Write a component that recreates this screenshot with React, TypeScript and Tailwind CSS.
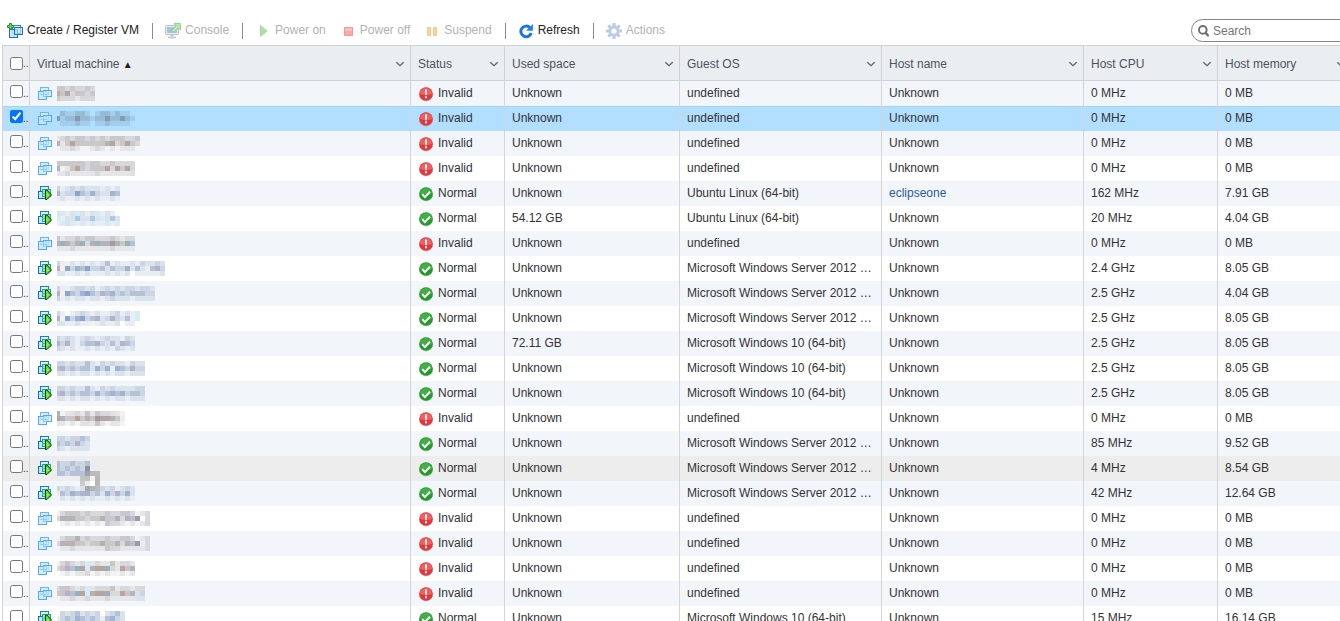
import { useState, type ReactNode } from 'react'

type Mosaic = [string, string, string]

interface Vm {
  name: Mosaic
  running: boolean
  used: string
  os: string
  host: string
  cpu: string
  memory: string
  hovered?: boolean
}

const TONES: Record<string, string> = {
  '0': '#f3f3f4',
  '1': '#e6e6e8',
  '2': '#d8d8dc',
  '3': '#c9c8cd',
  '4': '#b3b2b8',
  '5': '#9c9ca2',
  a: '#e9eef5',
  b: '#dae2ec',
  c: '#cbd5e3',
  d: '#b5c1d6',
  e: '#9fb3d3',
  f: '#8ba6ca',
  g: '#b3b2c8',
  p: '#e6dfdd',
  q: '#cfc3c1',
  r: '#b5a5a1',
  s: '#f6f0ec',
  t: '#c9c9bd',
  u: '#d6eaf8',
  v: '#aacbe6',
  w: '#9bb1b8',
  x: '#a3cdea',
  y: '#95bbd6',
  z: '#809cb0',
}

const WIN_SERVER = 'Microsoft Windows Server 2012 …'
const WIN_10 = 'Microsoft Windows 10 (64-bit)'
const UBUNTU = 'Ubuntu Linux (64-bit)'

function invalid(name: Mosaic): Vm {
  return { name, running: false, used: 'Unknown', os: 'undefined', host: 'Unknown', cpu: '0 MHz', memory: '0 MB' }
}

function normal(name: Mosaic, os: string, cpu: string, memory: string, used = 'Unknown', host = 'Unknown'): Vm {
  return { name, running: true, used, os, host, cpu, memory }
}

const VMS: Vm[] = [
  invalid(['33232232', '4qr2q323', '32221222']),
  invalid(['.yxxyyx.xyyxyxx.', 'zxyyzyyxyyzyyzyx', '.xxxyxx.xxyxxxx.']),
  invalid(['12323323232333223', '413rq3333t4r23r32', '0112100121010111.']),
  invalid(['3333332332232222', '401qr3233qr2r3r2d', '112111112111111p']),
  normal(['cabcbcbbbabab', 'gbccfdcecbbed', 'abaabababaaba'], UBUNTU, '162 MHz', '7.91 GB', 'Unknown', 'eclipseone'),
  normal(['buabubabuaba.', 'uabbvbbvbubvb', 'aubuauauaauau'], UBUNTU, '20 MHz', '4.04 GB', '54.12 GB'),
  invalid(['3122323322232122', '4w434w24w4454twd', '1112111111121111']),
  normal(['casbabababdabaabacbbcb', 'gsfcedfccdbdccebdbadgc', 'bbaababaaababab.aaaaab'], WIN_SERVER, '2.4 GHz', '8.05 GB'),
  normal(['caabccbcabcbcbccbccb', 'gsfdcefdcgdecdcdddcc', 'cababbabbabcbbbabbbb'], WIN_SERVER, '2.5 GHz', '4.04 GB'),
  normal(['ca.abcbabaabcabau', 'gsfcefcdgbcgcbdau', 'bbaabaa0abaab.aa.'], WIN_SERVER, '2.5 GHz', '8.05 GB'),
  normal(['cbcbabcbabcbbacb', 'gcgbacddgcbdbgdc', 'cbabaabababacbab'], WIN_10, '2.5 GHz', '8.05 GB', '72.11 GB'),
  normal(['ccbcbbdbacbcbbacbb', 'dgcdcddbeceaedcgcc', 'bbababbabababbabbb'], WIN_10, '2.5 GHz', '8.05 GB'),
  normal(['ccbcbbdbacbcbbbbcc', 'dgcdcddcecdedecddc', 'bbababbabababbabbb'], WIN_10, '2.5 GHz', '8.05 GB'),
  invalid(['401p21q1t22p1s', 'r43qr34q5rr4ta', '11010pp1q10110']),
  normal(['ccbccdc', 'dcdcgcb', 'cbabbbb'], WIN_SERVER, '85 MHz', '9.52 GB'),
  { ...normal(['dccdccd', 'dcdcdcd', 'ddcdddd'], WIN_SERVER, '4 MHz', '8.54 GB'), hovered: true },
  normal(['cbcbabdcbcbcabcb', 'adcedgecdbecgceb', '.babababaabababa'], WIN_SERVER, '42 MHz', '12.64 GB'),
  invalid(['s233323222322332012', '2444q323t433424d5.2', '.010101010322101012']),
  invalid(['s233423222322332012', '2444q323t433424d5a2', '.112111111322111112']),
  invalid(['s2q212u1211t1221', '2qgdwru4rrw21rqg', '.010112010100101']),
  invalid(['23q212u1222t122122', '3qgdwru4rrw22rqgbc', '0112112111211111bb']),
  normal(['.cbcdbcbc.bcdb', 'acdcedcdcadecb', 'bababababababa'], WIN_10, '15 MHz', '16.14 GB'),
]

/* Redacted name, drawn as a grid of five-pixel tiles. */
function RedactedName({ tiles }: { tiles: Mosaic }) {
  const width = tiles[0].length * 5 - 2
  return (
    <svg width={width} height={15} shapeRendering="crispEdges" aria-hidden="true" className="shrink-0">
      {tiles.map((line, row) =>
        [...line].map((tone, col) =>
          tone === '.' ? null : (
            <rect key={`${row}-${col}`} x={col * 5 - 2} y={row * 5} width={5} height={5} fill={TONES[tone]} />
          ),
        ),
      )}
    </svg>
  )
}

const CURSOR: [number, number, string][] = [
  [5, 0, '#8f939c'],
  [5, 5, '#9fa2ab'],
  [10, 5, '#b9b9bb'],
  [15, 5, '#bcbcbc'],
  [0, 10, '#c3c3c6'],
  [5, 10, '#c2c2c5'],
  [10, 10, '#f0f0f0'],
  [15, 10, '#b8b8b8'],
  [0, 15, '#cacacc'],
  [5, 15, '#ececec'],
  [10, 15, '#ffffff'],
  [15, 15, '#b8b8b8'],
  [5, 20, '#a8a8ac'],
  [10, 20, '#b4b4b8'],
  [15, 20, '#bcbcc0'],
]

function CursorTiles() {
  return (
    <svg
      width={20}
      height={25}
      shapeRendering="crispEdges"
      aria-hidden="true"
      className="pointer-events-none absolute top-2.5 left-[50px] z-10"
    >
      {CURSOR.map(([x, y, fill]) => (
        <rect key={`${x}-${y}`} x={x} y={y} width={5} height={5} fill={fill} />
      ))}
    </svg>
  )
}

function VmIcon({ running }: { running: boolean }) {
  return running ? (
    <svg width={16} height={16} viewBox="0 0 16 16" aria-hidden="true" className="shrink-0">
      <rect x="3.5" y="1.5" width="8" height="7" fill="#d5effb" stroke="#1c7bd0" />
      <rect x="1.5" y="6.5" width="8" height="7" fill="#b9ecf5" stroke="#1668c0" />
      <rect x="5.5" y="4.5" width="8" height="7" fill="#8fe3bd" fillOpacity=".9" stroke="#2aa583" />
      <path d="M5 8.5h4" fill="none" stroke="#45b9b0" />
      <path d="M8.5 5v9.5H10l4.5-4.5L10 5z" fill="#58c928" stroke="#0a4a10" />
      <path d="M9.5 6.5v6l3-2.500z" fill="#94e763" />
    </svg>
  ) : (
    <svg width={16} height={16} viewBox="0 0 16 16" aria-hidden="true" className="shrink-0">
      <rect x="3.5" y="2.5" width="8" height="7" fill="#d3edff" stroke="#6ab4f5" />
      <rect x="1.5" y="6.5" width="8" height="8" fill="#c5e8ff" fillOpacity=".8" stroke="#57a8f0" />
      <rect x="6.5" y="5.5" width="8" height="6" fill="#c9e8ff" fillOpacity=".7" stroke="#57a8f0" />
      <path d="M3.5 9.500h6M6.500 6.500v5h3" fill="none" stroke="#8ccafa" />
    </svg>
  )
}

function StatusIcon({ ok }: { ok: boolean }) {
  return (
    <svg width={16} height={16} viewBox="0 0 16 16" aria-hidden="true" className="shrink-0">
      <circle cx="8" cy="8.4" r="7" fill="#9a9a9a" fillOpacity=".5" />
      <circle cx="8" cy="8" r="6.8" fill={ok ? '#259a2b' : '#e6363b'} />
      <path d="M1.9 8a6.1 6.1 0 0 1 12.2 0c-3 1.2-8 1.4-12.2 0z" fill={ok ? '#4fb850' : '#f6706f'} fillOpacity=".7" />
      {ok ? (
        <path d="M4.2 8.2l2.7 2.9 5-5.4" fill="none" stroke="#fff" strokeWidth="2" />
      ) : (
        <path d="M7 3.4h2l-.3 5.8H7.3zM7 10.3h2v1.9H7z" fill="#fff" />
      )}
    </svg>
  )
}

function CreateIcon() {
  return (
    <svg width={16} height={16} viewBox="0 0 16 16" aria-hidden="true">
      <rect x="5.5" y="2.5" width="8" height="8" fill="#d8f0ff" stroke="#2b83dc" />
      <rect x="2.5" y="6.5" width="8" height="8" fill="#bfe4fb" fillOpacity=".85" stroke="#1c6fd0" />
      <rect x="7.5" y="4.5" width="8" height="7" fill="#bfe4fb" fillOpacity=".65" stroke="#1c6fd0" />
      <path d="M2.5.5h2v2h2v2h-2v2h-2v-2h-2v-2h2z" fill="#5ddb55" stroke="#178a22" strokeWidth=".9" />
    </svg>
  )
}

function ConsoleIcon() {
  return (
    <svg width={16} height={16} viewBox="0 0 16 16" aria-hidden="true">
      <rect x=".5" y="2.5" width="13" height="9" rx="1" fill="#eceff2" stroke="#b9c0c8" />
      <rect x="2" y="4" width="10" height="6" fill="#aebfda" />
      <path d="M5.5 12h3v1.6h2.5v1.9H3v-1.9h2.5z" fill="#c9ced5" />
      <path d="M9 .6h6.4V7l-2.1-2.1-4.4 4.5L6.7 7.2l4.4-4.5z" fill="#b9eab4" stroke="#86cf86" strokeWidth=".9" />
    </svg>
  )
}

function PlayIcon() {
  return (
    <svg width={16} height={16} viewBox="0 0 16 16" aria-hidden="true">
      <path d="M5.5 2.5l6.5 5.5-6.5 5.5z" fill="#a9e0a4" stroke="#a4dc9f" />
    </svg>
  )
}

function StopIcon() {
  return (
    <svg width={16} height={16} viewBox="0 0 16 16" aria-hidden="true">
      <rect x="4.5" y="4.5" width="8" height="8" fill="#f8a9ab" stroke="#f39a9d" />
      <path d="M5 5h7v3H5z" fill="#fbbdbe" />
    </svg>
  )
}

function PauseIcon() {
  return (
    <svg width={16} height={16} viewBox="0 0 16 16" aria-hidden="true">
      <path d="M3.5 4.5h3v8h-3zM9.5 4.5h3v8h-3z" fill="#fcd3a0" stroke="#f9c88d" />
    </svg>
  )
}

function RefreshIcon() {
  return (
    <svg width={16} height={16} viewBox="0 0 16 16" aria-hidden="true">
      <path d="M12.1 4.9A5.3 5.3 0 1 0 13.2 10" fill="none" stroke="#1877e0" strokeWidth="3" />
      <path d="M14.9 1v6.8H8.1z" fill="#1f82ec" />
    </svg>
  )
}

function GearIcon() {
  return (
    <svg width={16} height={16} viewBox="0 0 16 16" aria-hidden="true">
      <g fill="#bccde6">
        {[0, 45, 90, 135].map((angle) => (
          <rect key={angle} x="6.4" y="0" width="3.2" height="16" rx=".6" transform={`rotate(${angle} 8 8)`} />
        ))}
        <circle cx="8" cy="8" r="5.7" />
      </g>
      <circle cx="8" cy="8" r="2.6" fill="#fff" />
    </svg>
  )
}

function Chevron() {
  return (
    <svg width={10} height={8} viewBox="0 0 10 8" aria-hidden="true" className="shrink-0">
      <path d="M1.3 2.3L5 5.7l3.7-3.4" fill="none" stroke="#5b6670" strokeWidth="1.3" />
    </svg>
  )
}

function ToolButton({ icon, label, disabled = false }: { icon: ReactNode; label: string; disabled?: boolean }) {
  return (
    <button
      type="button"
      disabled={disabled}
      className="flex h-6 shrink-0 items-center gap-1 pr-px text-[#222] disabled:text-[#b2b2b2]"
    >
      {icon}
      <span className="pb-0.5">{label}</span>
    </button>
  )
}

function Separator() {
  return <span className="h-4 w-px shrink-0 bg-[#8c8c8c]" />
}

const COLUMNS = ['Status', 'Used space', 'Guest OS', 'Host name', 'Host CPU', 'Host memory']

const TICK = 'block size-[13px] shrink-0'
const CELL = 'truncate border-r border-[#d4d4d6] pl-[7px] pb-0.5'
const HEAD = 'border-y border-r border-[#cfd2d4] pt-0.5 pr-[5px] pl-[7px] font-normal'

export default function App() {
  const [selected, setSelected] = useState<number[]>([1])

  const toggle = (index: number) =>
    setSelected((now) => (now.includes(index) ? now.filter((i) => i !== index) : [...now, index]))

  return (
    <div className="h-screen overflow-hidden bg-white font-['Liberation_Sans',Arial,sans-serif] text-xs text-[#333]">
      <div className="w-[calc(100%+12px)]">
        <header className="flex h-[45px] items-center justify-between pt-4 pl-[7px]">
          <div className="flex items-center gap-3">
            <ToolButton icon={<CreateIcon />} label="Create / Register VM" />
            <Separator />
            <ToolButton icon={<ConsoleIcon />} label="Console" disabled />
            <Separator />
            <div className="flex gap-[13px]">
              <ToolButton icon={<PlayIcon />} label="Power on" disabled />
              <ToolButton icon={<StopIcon />} label="Power off" disabled />
              <ToolButton icon={<PauseIcon />} label="Suspend" disabled />
            </div>
            <Separator />
            <ToolButton icon={<RefreshIcon />} label="Refresh" />
            <Separator />
            <ToolButton icon={<GearIcon />} label="Actions" disabled />
          </div>
          <label className="flex h-[23px] w-[161px] items-center gap-1 rounded-full border border-[#858585] pl-1.5">
            <svg width={11} height={12} viewBox="0 0 11 12" aria-hidden="true" className="shrink-0">
              <circle cx="4.8" cy="4.9" r="3.8" fill="none" stroke="#6f6f6f" strokeWidth="2" />
              <path d="M7.4 7.6l3.4 3.6" stroke="#6f6f6f" strokeWidth="2.4" />
            </svg>
            <input
              type="text"
              aria-label="Search"
              placeholder="Search"
              className="w-full min-w-0 bg-transparent outline-none placeholder:text-[#757575]"
            />
          </label>
        </header>

        <div className="pl-0.5">
          <table className="w-full table-fixed border-separate border-spacing-0 border-l border-[#d4d4d6]">
            <colgroup>
              <col className="w-[27px]" />
              <col />
              <col className="w-[94px]" />
              <col className="w-[175px]" />
              <col className="w-[202px]" />
              <col className="w-[202px]" />
              <col className="w-[134px]" />
              <col className="w-[134px]" />
            </colgroup>
            <thead>
              <tr className="h-9 bg-[#eaeef1] text-[#4b545c]">
                <th className="border-y border-r border-[#cfd2d4] p-0 pt-0.5 pl-[7px]">
                  <div className="flex items-center font-normal">
                    <input
                      type="checkbox"
                      aria-label="Select all"
                      className={TICK}
                      checked={selected.length === VMS.length}
                      onChange={(e) => setSelected(e.target.checked ? VMS.map((_, i) => i) : [])}
                    />
                    <span className="text-[10px]" aria-hidden="true">..</span>
                  </div>
                </th>
                <th className={HEAD}>
                  <div className="flex items-center justify-between">
                    <span>
                      Virtual machine <span className="text-[10px] leading-none text-[#222]">▲</span>
                    </span>
                    <Chevron />
                  </div>
                </th>
                {COLUMNS.map((title) => (
                  <th key={title} className={HEAD}>
                    <div className="flex items-center justify-between">
                      {title}
                      <Chevron />
                    </div>
                  </th>
                ))}
              </tr>
            </thead>
            <tbody>
              {VMS.map((vm, index) => {
                const picked = selected.includes(index)
                const tint = picked
                  ? 'bg-[#b2dfff] shadow-[inset_0_1px_#a3d3f3]'
                  : vm.hovered
                    ? 'bg-[#ededed]'
                    : index % 2 === 0
                      ? 'bg-[#f2f6fb]'
                      : 'bg-white'
                return (
                  <tr key={index} className={`h-[25px] ${tint}`}>
                    <td className="border-r border-[#d4d4d6] p-0 pb-1 pl-[7px]">
                      <div className="flex h-4 items-center">
                        <input
                          type="checkbox"
                          aria-label={`Select row ${index + 1}`}
                          className={TICK}
                          checked={picked}
                          onChange={() => toggle(index)}
                        />
                        <span className="pt-1 text-[10px]" aria-hidden="true">..</span>
                      </div>
                    </td>
                    <td className="relative border-r border-[#d4d4d6] p-0 pb-px pl-[7px]">
                      <div className="flex items-end gap-1">
                        <VmIcon running={vm.running} />
                        <RedactedName tiles={vm.name} />
                      </div>
                      {vm.hovered && <CursorTiles />}
                    </td>
                    <td className="border-r border-[#d4d4d6] py-0 pl-[7px]">
                      <div className="flex items-center gap-1">
                        <StatusIcon ok={vm.running} />
                        <span className="pb-0.5">{vm.running ? 'Normal' : 'Invalid'}</span>
                      </div>
                    </td>
                    <td className={CELL}>{vm.used}</td>
                    <td className={CELL}>{vm.os}</td>
                    <td className={CELL}>
                      {vm.host === 'Unknown' ? (
                        vm.host
                      ) : (
                        <a href="#host" className="text-[#2b5a9b]">
                          {vm.host}
                        </a>
                      )}
                    </td>
                    <td className={CELL}>{vm.cpu}</td>
                    <td className={CELL}>{vm.memory}</td>
                  </tr>
                )
              })}
            </tbody>
          </table>
        </div>
      </div>
    </div>
  )
}
